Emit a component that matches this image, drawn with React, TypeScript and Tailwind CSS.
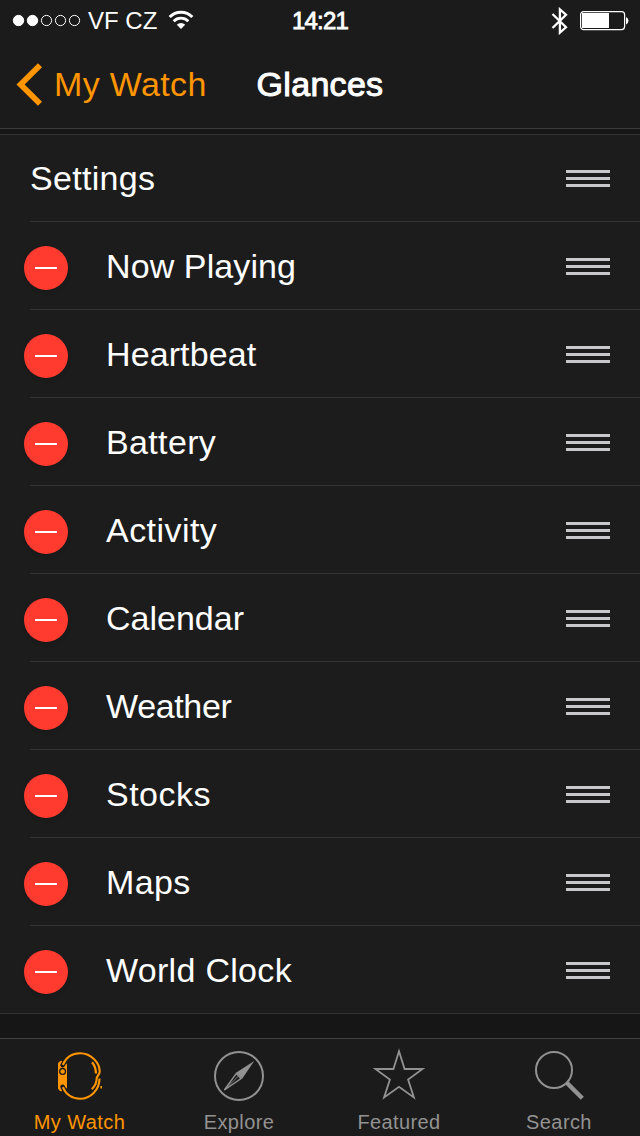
import clsx from "clsx";

const glances = [
  { name: "Now Playing", tracking: "tracking-[0.1px]" },
  { name: "Heartbeat", tracking: "tracking-[0.1px]" },
  { name: "Battery", tracking: "tracking-[0.35px]" },
  { name: "Activity", tracking: "tracking-[0.45px]" },
  { name: "Calendar", tracking: "tracking-normal" },
  { name: "Weather", tracking: "tracking-[-0.35px]" },
  { name: "Stocks", tracking: "tracking-[0.5px]" },
  { name: "Maps", tracking: "tracking-[0.4px]" },
  { name: "World Clock", tracking: "tracking-[0.3px]" },
];

const WifiIcon = () => (
  <svg width="26" height="20" viewBox="0 0 26 20" fill="none" className="-mt-0.5 ml-[11px]">
    <path d="M1.7 7A16 16 0 0 1 24.3 7" stroke="#fff" strokeWidth="3" />
    <path d="M5.7 11.2A10.4 10.4 0 0 1 20.3 11.2" stroke="#fff" strokeWidth="2.8" />
    <path d="M13 19L8.8 14.7A6 6 0 0 1 17.2 14.7Z" fill="#fff" />
  </svg>
);

const BluetoothIcon = () => (
  <svg width="17" height="28" viewBox="0 0 17 28" fill="none">
    <path d="M1.5 7L15 20.3L8.9 25.6V2.4L15 7.7L1.5 21" stroke="#fff" strokeWidth="2.3" />
  </svg>
);

const BatteryIcon = () => (
  <svg width="50" height="20" viewBox="0 0 50 20" fill="none">
    <rect x="0.6" y="0.6" width="44" height="18" rx="3" stroke="#fff" strokeWidth="1.2" />
    <rect x="2" y="2" width="27" height="15" fill="#fff" />
    <path d="M46 6A4 4 0 0 1 46 13.4Z" fill="#fff" />
  </svg>
);

const StatusBar = () => (
  <div className="grid h-10 grid-cols-3 items-center pt-0.5 text-2xl">
    <div className="flex items-center pl-3 whitespace-nowrap">
      <svg width="69" height="14" viewBox="0 0 69 14" fill="none" stroke="#fff">
        <circle cx="6.5" cy="6.5" r="5.2" fill="#fff" />
        <circle cx="20.5" cy="6.5" r="5.2" fill="#fff" />
        <circle cx="34.5" cy="6.5" r="5.1" />
        <circle cx="48.5" cy="6.5" r="5.1" />
        <circle cx="62.5" cy="6.5" r="5.1" />
      </svg>
      <span className="ml-[7px]">VF CZ</span>
      <WifiIcon />
    </div>
    <span className="text-center tracking-[-0.8px] [-webkit-text-stroke:0.8px_#fff]">14:21</span>
    <div className="flex items-center justify-end gap-3 pr-[10px]">
      <BluetoothIcon />
      <BatteryIcon />
    </div>
  </div>
);

const NavBar = () => (
  <div className="grid h-[88px] grid-cols-[1fr_auto_1fr] items-center text-[34px]">
    <button type="button" className="flex items-center pl-4 text-[#ff9500]">
      <svg width="27" height="43" viewBox="0 0 27 43" fill="none">
        <path d="M24 2.2L4.6 21.5L24 40.8" stroke="currentColor" strokeWidth="5.8" />
      </svg>
      <span className="ml-[11px] whitespace-nowrap tracking-[0.35px]">My Watch</span>
    </button>
    <h1 className="tracking-[0.3px] [-webkit-text-stroke:1px_#fff]">Glances</h1>
  </div>
);

const Grip = () => (
  <div className="ml-auto flex flex-col gap-1">
    <div className="h-[3px] w-11 bg-[#c7c7cc]" />
    <div className="h-[3px] w-11 bg-[#c7c7cc]" />
    <div className="h-[3px] w-11 bg-[#c7c7cc]" />
  </div>
);

type GlanceRowProps = {
  name: string;
  tracking: string;
  isLast: boolean;
};

const GlanceRow = ({ name, tracking, isLast }: GlanceRowProps) => (
  <li className={clsx("h-[88px] border-[#333]", isLast ? "border-b pl-6" : "pl-[30px]")}>
    <div
      className={clsx(
        "flex h-full items-center border-[#333] pt-0.5 pr-[30px]",
        !isLast && "border-b",
      )}
    >
      <button
        type="button"
        aria-label={`Remove ${name}`}
        className={clsx(
          "mt-[3px] flex size-11 items-center justify-center rounded-full bg-[#ff3b30] shadow-[0_2px_4px_rgba(0,0,0,0.15)]",
          !isLast && "-ml-1.5",
        )}
      >
        <span className="h-0.5 w-[22px] bg-white" />
      </button>
      <span className={clsx("mb-0.5 ml-[38px]", tracking)}>{name}</span>
      <Grip />
    </div>
  </li>
);

const WatchIcon = () => (
  <svg width="51" height="52" viewBox="0 0 51 52" fill="none" stroke="currentColor" strokeWidth="2.1">
    <path
      d="M4 13.5Q5 10.8 8 10.8L13 14V38L8 41.2Q5 41.2 4 38.5Z"
      fill="currentColor"
      stroke="none"
    />
    {/* dark gap where the band enters the case */}
    <path d="M8.6 15.2L11 11M8.6 36.8L11 41" stroke="#1c1b1b" strokeWidth="4.6" strokeLinecap="round" />
    <path d="M8.8 14.8C12 7.5 18.5 3.3 26 3.3C37.5 3.3 45.7 13 45.7 21.5C45.7 25 42.6 25.5 42.6 29C42.6 33.5 40.5 36.5 37.8 39.2" />
    <path d="M8.8 37.2C12 44.5 18.5 48.7 26 48.7C36.5 48.7 45.5 40 45.5 28.5" />
    <path d="M38 12.2C40.5 15 41.8 18 42 23.5" strokeWidth="2.3" />
    <path d="M47.2 36V38.6" strokeWidth="1.6" />
    <circle cx="8.6" cy="21.4" r="2.9" stroke="#1c1b1b" strokeWidth="1.3" />
  </svg>
);

const CompassIcon = () => (
  <svg width="52" height="52" viewBox="0 0 52 52" fill="none" stroke="currentColor">
    <circle cx="26" cy="26" r="24" strokeWidth="2" />
    <path d="M41.2 11L23 22.8L25.5 25L29 29Z" fill="currentColor" stroke="none" />
    <path d="M11.4 40L23.2 23.6L28 28.6Z" strokeWidth="1.4" />
    <path d="M11.4 40L25.5 26" strokeWidth="0.8" />
  </svg>
);

const StarIcon = () => (
  <svg
    width="54"
    height="52"
    viewBox="0 0 54 52"
    fill="none"
    stroke="currentColor"
    className="overflow-visible"
  >
    <path
      d="M27 1.2L32.6 19H50.6L36.1 29.6L41.9 47.4L27 36.8L12.1 47.4L17.9 29.6L3.4 19H21.4Z"
      strokeWidth="1.8"
    />
  </svg>
);

const SearchIcon = () => (
  <svg width="52" height="52" viewBox="0 0 52 52" fill="none" stroke="currentColor">
    <circle cx="21" cy="20" r="18" strokeWidth="2" />
    <path d="M34 33L49.3 48.3" strokeWidth="4.4" />
  </svg>
);

const tabs = [
  { label: "My Watch", icon: <WatchIcon /> },
  { label: "Explore", icon: <CompassIcon /> },
  { label: "Featured", icon: <StarIcon /> },
  { label: "Search", icon: <SearchIcon /> },
];

const TabBar = () => (
  <nav className="grid h-[98px] grid-cols-[159px_160px_160px_160px] border-t border-[#414141] bg-[#1c1b1b]">
    {tabs.map((tab, index) => (
      <button
        key={tab.label}
        type="button"
        className={clsx(
          "flex flex-col items-center pt-[11px]",
          index === 0 ? "text-[#ff9500]" : "text-[#929292]",
        )}
      >
        {tab.icon}
        <span className="mt-2 text-xl leading-6 tracking-[0.4px]">{tab.label}</span>
      </button>
    ))}
  </nav>
);

const App = () => {
  return (
    <div className="flex h-[1136px] w-[640px] flex-col bg-[#161616] font-['Liberation_Sans',sans-serif] text-white">
      <header className="h-[129px] border-b border-[#3a3a3a] bg-[#1b1b1b]">
        <StatusBar />
        <NavBar />
      </header>

      <ul className="mt-[5px] border-t border-[#333] bg-[#1c1c1c] text-[34px] leading-10">
        <li className="h-[87px] pl-[30px]">
          <div className="flex h-full items-center border-b border-[#333] pt-px pr-[30px]">
            <span className="mb-0.5 tracking-[0.3px]">Settings</span>
            <Grip />
          </div>
        </li>
        {glances.map((glance, index) => (
          <GlanceRow key={glance.name} {...glance} isLast={index === glances.length - 1} />
        ))}
      </ul>

      <div className="mt-auto">
        <TabBar />
      </div>
    </div>
  );
};

export default App;
